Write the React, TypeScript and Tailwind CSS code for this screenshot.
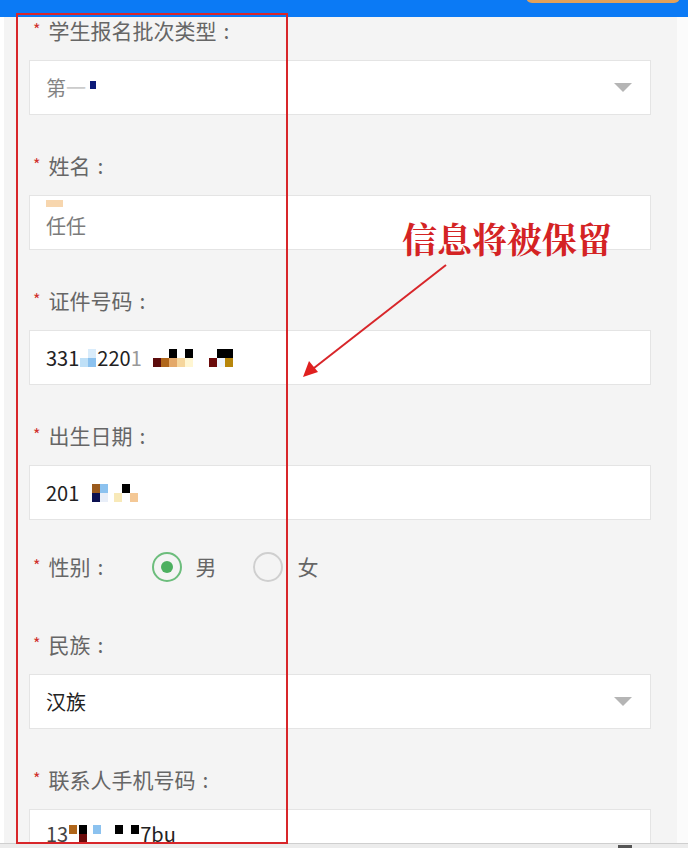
import React from 'react'

const font = { fontFamily: '"Microsoft YaHei", "Noto Sans CJK SC", "Liberation Sans", sans-serif' }

// little mosaic blocks that hide part of the personal data
function Blocks({ top, bottom }: { top: string[]; bottom: string[] }) {
  return (
    <span className="inline-flex flex-col mx-[1px]">
      <span className="flex">
        {top.map((c, i) => (
          <span key={i} className="w-[8px] h-[9px]" style={{ background: c }} />
        ))}
      </span>
      <span className="flex">
        {bottom.map((c, i) => (
          <span key={i} className="w-[8px] h-[9px]" style={{ background: c }} />
        ))}
      </span>
    </span>
  )
}

function Label({ text }: { text: string }) {
  return (
    <div className="flex items-center h-[28px] text-[21px] text-[#666]">
      <span className="text-[#d0302c] text-[16px] ml-[4px] mr-[8px] -mt-[4px]">*</span>
      <span>{text}</span>
      <span className="ml-[7px]">:</span>
    </div>
  )
}

function Caret() {
  return (
    <svg width="18" height="10" viewBox="0 0 18 10" className="ml-auto mr-[18px]">
      <path d="M0 0 L18 0 L9 9 Z" fill="#b5b5b5" />
    </svg>
  )
}

function Box({ children, select }: { children?: React.ReactNode; select?: boolean }) {
  return (
    <div className="flex items-center h-[55px] w-[622px] bg-white border border-[#e4e4e4] pl-[16px] text-[20px] text-[#222]">
      <div className="flex items-center">{children}</div>
      {select && <Caret />}
    </div>
  )
}

function Radio({ checked }: { checked?: boolean }) {
  return (
    <span
      className={
        checked
          ? 'flex items-center justify-center w-[30px] h-[30px] rounded-full border-2 border-[#6cbd7c]'
          : 'flex items-center justify-center w-[30px] h-[30px] rounded-full border-2 border-[#cfcfcf]'
      }
    >
      {checked && <span className="w-[12px] h-[12px] rounded-full bg-[#4db060]" />}
    </span>
  )
}

export default function App() {
  return (
    <div className="relative w-[688px] h-[848px] overflow-hidden bg-white" style={font}>
      <div className="relative h-[17px] bg-[#0b7af5]">
        <div className="absolute right-[8px] -top-[6px] w-[154px] h-[9px] rounded-b-[6px] bg-[#e3a15a]" />
      </div>

      <div className="flex h-[826px]">
        <div className="w-[4px] bg-white" />
        <div className="w-[673px] bg-[#f4f4f4] pl-[25px]">
          <Label text="学生报名批次类型" />
          <div className="mt-[15px] mb-[37px]">
            <Box select>
              <span className="text-[#333] opacity-60">第</span>
              <span className="text-[#ccc]">一</span>
              <span className="w-[6px] h-[8px] bg-[#0c1a78] ml-[4px] -mt-[6px]" />
            </Box>
          </div>

          <Label text="姓名" />
          <div className="mt-[15px] mb-[37px]">
            <Box>
              <span className="relative text-[#444] opacity-70 leading-none pt-[6px]">
                任任
                <span className="absolute left-0 top-[-10px] w-[17px] h-[7px] bg-[#f2b66f] opacity-80" />
              </span>
            </Box>
          </div>

          <Label text="证件号码" />
          <div className="mt-[15px] mb-[37px]">
            <Box>
              <span>331</span>
              <Blocks top={['#ffffff', '#d9ecfb']} bottom={['#bfe0f7', '#8cc2ef']} />
              <span>220</span>
              <span className="text-[#999]">1</span>
              <span className="w-[10px]" />
              <Blocks top={['#fff', '#fff', '#000', '#fff', '#000', '#fff']} bottom={['#5d0d0d', '#b0661a', '#e4a868', '#f6d69c', '#fff6d2', '#fff']} />
              <span className="w-[6px]" />
              <Blocks top={['#fff', '#000', '#000']} bottom={['#6a0b0b', '#f0f6ff', '#b7860c']} />
            </Box>
          </div>

          <Label text="出生日期" />
          <div className="mt-[15px] mb-[33px]">
            <Box>
              <span>201</span>
              <span className="w-[12px]" />
              <Blocks top={['#9a5a1c', '#8cc2ef']} bottom={['#0c1050', '#e8eef8']} />
              <span className="w-[4px]" />
              <Blocks top={['#fff', '#000', '#fff']} bottom={['#f8e9b8', '#fff', '#f4c896']} />
            </Box>
          </div>

          <div className="flex items-center h-[28px] text-[21px] text-[#666]">
            <span className="text-[#d0302c] text-[16px] ml-[4px] mr-[8px] -mt-[4px]">*</span>
            <span className="flex w-[104px]">
              <span>性别</span>
              <span className="ml-[7px]">:</span>
            </span>
            <Radio checked />
            <span className="ml-[13px] mr-[37px]">男</span>
            <Radio />
            <span className="ml-[14px]">女</span>
          </div>

          <div className="mt-[50px]">
            <Label text="民族" />
          </div>
          <div className="mt-[15px] mb-[37px]">
            <Box select>
              <span>汉族</span>
            </Box>
          </div>

          <Label text="联系人手机号码" />
          <div className="mt-[15px]">
            <Box>
              <span className="-mt-[6px] flex items-center">
                <span className="text-[#444]">13</span>
                <Blocks top={['#b0661a']} bottom={['#fff']} />
                <Blocks top={['#000']} bottom={['#6a0b0b']} />
                <span className="w-[4px]" />
                <Blocks top={['#8cc2ef']} bottom={['#fff']} />
                <span className="w-[12px]" />
                <Blocks top={['#000', '#fff', '#000']} bottom={['#fff', '#fff', '#fff']} />
                <span>7bu</span>
              </span>
            </Box>
          </div>
        </div>
        <div className="flex-1 bg-[#fbfbfb]" />
      </div>

      <div className="relative h-[5px] border-t border-[#cfcfcf] bg-[#ececec]">
        <div className="absolute left-[618px] top-[1px] w-[14px] h-[4px] bg-[#555]" />
      </div>

      {/* annotation overlay */}
      <div className="absolute left-[16px] top-[13px] w-[272px] h-[831px] border-2 border-[#d8262a]" />
      <div
        className="absolute left-[402px] top-[221px] text-[35px] leading-none text-[#d42324] font-bold"
        style={{ fontFamily: '"Noto Serif CJK SC", "Noto Sans CJK SC", serif' }}
      >
        信息将被保留
      </div>
      <svg className="absolute left-0 top-0" width="688" height="848">
        <line x1="446" y1="265" x2="314" y2="368" stroke="#d8262a" strokeWidth="2" />
        <path d="M303 377 L309 361 L318 372 Z" fill="#e0201f" />
      </svg>
    </div>
  )
}
